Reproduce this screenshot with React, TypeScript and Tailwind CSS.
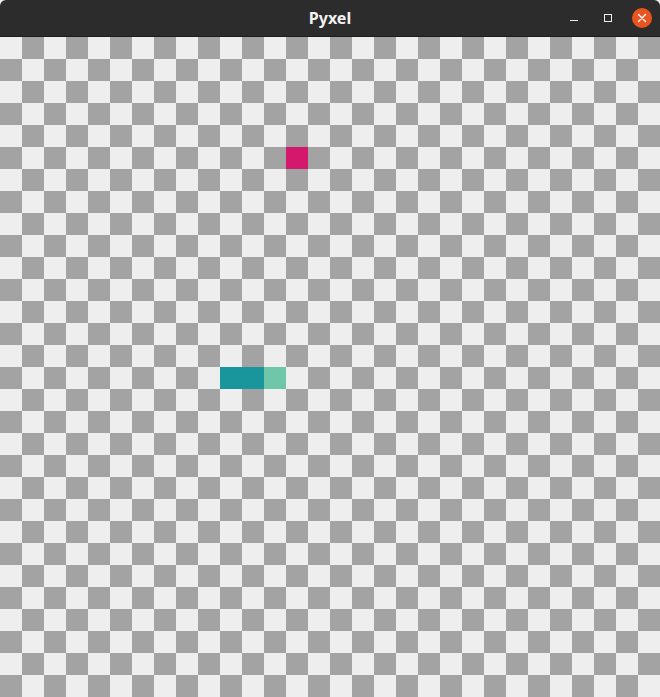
import React from "react";

const SPECIAL: Record<string, string> = {
  "5-13": "bg-[#d4186c]",
  "15-10": "bg-[#19959c]",
  "15-11": "bg-[#19959c]",
  "15-12": "bg-[#70c6a9]",
};

export default function App() {
  const cells = [];
  for (let r = 0; r < 30; r++) {
    for (let c = 0; c < 30; c++) {
      const key = `${r}-${c}`;
      const special = SPECIAL[key];
      const cls = special ? special : (r + c) % 2 === 0 ? "bg-[#eeeeee]" : "bg-[#a3a3a3]";
      cells.push(<div key={key} className={`w-[22px] h-[22px] ${cls}`} />);
    }
  }
  return (
    <div className="w-[660px] h-[697px] flex flex-col bg-[#eeeeee] overflow-hidden">
      <div className="relative h-[37px] shrink-0 bg-[#2c2c2c] border-b border-[#1d1d1d] rounded-t-[6px] flex items-center justify-center">
        <span className="text-[16px] font-bold text-[#f2f2f2] leading-none" style={{ fontFamily: '"Noto Sans", "DejaVu Sans", sans-serif' }}>
          Pyxel
        </span>
        <div className="absolute right-[1px] top-0 h-[36px] flex items-center gap-0">
          <div className="w-[34px] h-[36px] flex items-center justify-center">
            <div className="w-[8px] h-[1px] bg-[#eeeeee] mt-[4px]" />
          </div>
          <div className="w-[34px] h-[36px] flex items-center justify-center">
            <div className="w-[8px] h-[8px] border border-[#eeeeee]" />
          </div>
          <div className="w-[34px] h-[36px] flex items-center justify-center">
            <div className="w-[20px] h-[20px] rounded-full bg-[#e95420] flex items-center justify-center">
              <svg width="10" height="10" viewBox="0 0 10 10">
                <path d="M1.5 1.5 L8.5 8.5 M8.5 1.5 L1.5 8.5" stroke="#ffffff" strokeWidth="1.4" strokeLinecap="round" />
              </svg>
            </div>
          </div>
        </div>
      </div>
      <div className="grid grid-cols-[repeat(30,22px)] grid-rows-[repeat(30,22px)]">{cells}</div>
    </div>
  );
}
